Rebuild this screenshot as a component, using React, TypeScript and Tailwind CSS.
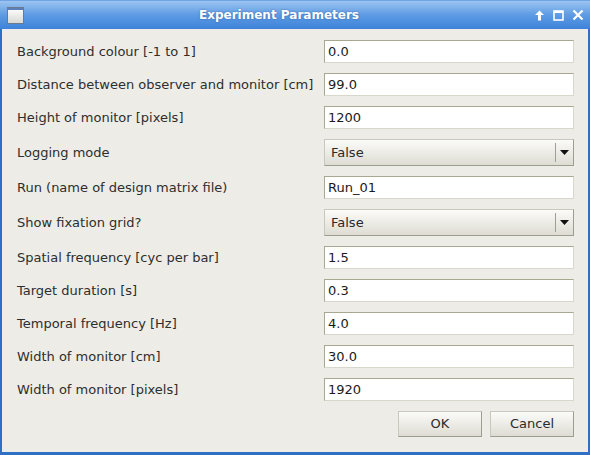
import React from "react";

const font = { fontFamily: '"DejaVu Sans", sans-serif' };

function TextField({ value }: { value: string }) {
  return (
    <div className="h-[23px] w-[250px] bg-white border border-[#d8d7cc] border-t-[#a8a78f] border-l-[#a8a78f] flex items-center pl-[3px] text-[13px] text-[#1a1a1a]">
      {value}
    </div>
  );
}

function SelectField({ value }: { value: string }) {
  return (
    <div className="h-[27px] w-[250px] flex items-center border border-[#c9c8bd] border-r-[#9e9d92] border-b-[#9e9d92] bg-gradient-to-b from-[#fbfbf9] to-[#dedcd3] text-[13px] text-[#2a2a2a]">
      <div className="flex-1 pl-[6px]">{value}</div>
      <div className="w-px h-[19px] bg-[#a09f96]" />
      <div className="w-[17px] flex items-center justify-center">
        <svg width="9" height="5" viewBox="0 0 9 5">
          <path d="M0 0 H9 L4.5 5 Z" fill="#111" />
        </svg>
      </div>
    </div>
  );
}

const rows: { label: string; value: string; select?: boolean }[] = [
  { label: "Background colour [-1 to 1]", value: "0.0" },
  { label: "Distance between observer and monitor [cm]", value: "99.0" },
  { label: "Height of monitor [pixels]", value: "1200" },
  { label: "Logging mode", value: "False", select: true },
  { label: "Run (name of design matrix file)", value: "Run_01" },
  { label: "Show fixation grid?", value: "False", select: true },
  { label: "Spatial frequency [cyc per bar]", value: "1.5" },
  { label: "Target duration [s]", value: "0.3" },
  { label: "Temporal frequency [Hz]", value: "4.0" },
  { label: "Width of monitor [cm]", value: "30.0" },
  { label: "Width of monitor [pixels]", value: "1920" },
];

export default function App() {
  return (
    <div className="w-[590px] h-[455px] flex flex-col bg-[#2f6fc4] overflow-hidden" style={font}>
      {/* Title bar */}
      <div className="h-[29px] flex items-center bg-gradient-to-b from-[#9cc4f0] via-[#5d9be4] to-[#3d82d9] border-t border-[#6fa3e6]">
        <div className="ml-[7px] w-[17px] h-[17px] border border-[#6d7a8c] bg-gradient-to-b from-[#ffffff] to-[#d8d8d4] flex flex-col">
          <div className="h-[2px] bg-[#5b7fb8]" />
        </div>
        <div className="flex-1 flex items-center justify-center text-white font-bold text-[12px] [text-shadow:0_0_2px_rgba(30,60,120,0.6)]">
          Experiment Parameters
        </div>
        <div className="mr-[6px] flex items-center gap-[8px]">
          <svg width="11" height="11" viewBox="0 0 11 11">
            <path d="M5.5 0.5 L10 5 H7 V10.5 H4 V5 H1 Z" fill="white" />
          </svg>
          <svg width="11" height="11" viewBox="0 0 11 11">
            <rect x="1" y="1" width="9" height="9" fill="none" stroke="white" strokeWidth="1.6" />
            <rect x="1" y="1" width="9" height="2" fill="white" />
          </svg>
          <svg width="12" height="12" viewBox="0 0 12 12">
            <path d="M1.5 1.5 L10.5 10.5 M10.5 1.5 L1.5 10.5" stroke="white" strokeWidth="2.2" />
          </svg>
        </div>
      </div>
      {/* Body */}
      <div className="flex-1 mx-[2px] mb-[3px] bg-[#edece6] flex flex-col pl-[15px] pr-[14px] pt-[11px]">
        <div className="flex flex-col gap-[10px]">
          {rows.map((r) => (
            <div key={r.label} className="flex items-center justify-between">
              <div className="text-[13px] text-[#2e2e2e]">{r.label}</div>
              {r.select ? <SelectField value={r.value} /> : <TextField value={r.value} />}
            </div>
          ))}
        </div>
        <div className="flex justify-end gap-[8px] mt-[10px]">
          <button className="w-[84px] h-[26px] border border-[#c9c8bd] border-r-[#9e9d92] border-b-[#9e9d92] bg-gradient-to-b from-[#fbfbf9] to-[#dedcd3] text-[13px] text-[#2a2a2a]">
            OK
          </button>
          <button className="w-[84px] h-[26px] border border-[#c9c8bd] border-r-[#9e9d92] border-b-[#9e9d92] bg-gradient-to-b from-[#fbfbf9] to-[#dedcd3] text-[13px] text-[#2a2a2a]">
            Cancel
          </button>
        </div>
      </div>
    </div>
  );
}
